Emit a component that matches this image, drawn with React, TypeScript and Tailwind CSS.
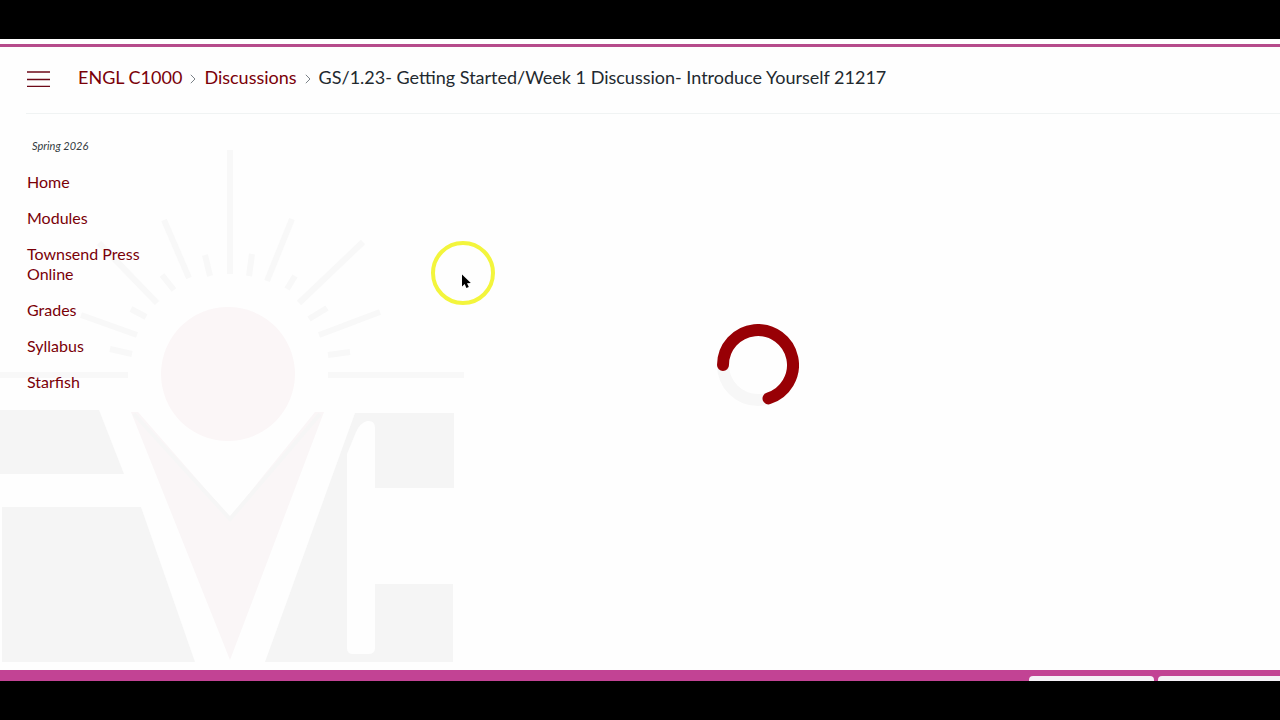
const navItems = [
  "Home",
  "Modules",
  "Townsend Press Online",
  "Grades",
  "Syllabus",
  "Starfish",
];

function Separator() {
  return (
    <svg viewBox="0 0 6 10" className="mx-2 mt-1 h-[10px] w-[6px]" fill="none" stroke="#7b8288" aria-hidden="true">
      <path d="M0.8 0.8 L5 5 L0.8 9.2" />
    </svg>
  );
}

function Watermark() {
  return (
    <svg
      viewBox="0 0 470 520"
      className="pointer-events-none absolute bottom-1 left-0 h-[520px] w-[470px]"
      aria-hidden="true"
    >
      {/* sun */}
      <circle cx="228" cy="228" r="67" fill="#fbf6f7" />

      {/* rays */}
      <g stroke="#f8f8f8" strokeWidth="6" fill="none">
        <path d="M230 4 V128" />
        <path d="M164 74 L189 132" />
        <path d="M292 73 L267 135" />
        <path d="M99 97 L157 157" />
        <path d="M363 96 L299 157" />
        <path d="M81 169 L137 189" />
        <path d="M380 166 L319 189" />
        <path d="M0 229 H128" />
        <path d="M328 229 H464" />
        <path d="M205 109 L210 130" />
        <path d="M252 108 L249 130" />
        <path d="M162 129 L174 144" />
        <path d="M295 130 L287 143" />
        <path d="M131 163 L146 171" />
        <path d="M327 162 L309 173" />
        <path d="M110 203 L132 208" />
        <path d="M350 206 L328 209" />
      </g>

      {/* letters F, V, C */}
      <g fill="#f5f5f5">
        <path d="M0 264 H99 L124 328 H0 Z" />
        <path d="M2 361 H141 L195 516 H2 Z" />
        <path d="M355 267 H454 V342 H375 V282 Q375 274 367 275 Q360 277 356 286 L347 308 V502 Q347 508 353 508 H368 Q375 508 375 502 V438 H453 V516 H265 Z" />
      </g>
      <path d="M131 266 H138 L230 371 L315 266 H324 L230 514 Z" fill="#faf6f7" />
      <path d="M134 268 L230 373 L320 268" fill="none" stroke="#f6f6f6" strokeWidth="4" />
    </svg>
  );
}

function Spinner() {
  return (
    <svg viewBox="0 0 82 82" className="h-[82px] w-[82px]" fill="none" strokeWidth="12" role="img" aria-label="Loading">
      <circle cx="41" cy="41" r="35" stroke="#f7f7f7" />
      <path d="M6 41 A35 35 0 1 1 51.5 74.4" stroke="#980005" strokeLinecap="round" />
    </svg>
  );
}

function Pointer() {
  return (
    <div className="pointer-events-none absolute left-[431px] top-[194px] h-16 w-16 rounded-full border-4 border-[#f3f53c]">
      <svg viewBox="0 0 10 15" className="absolute left-[26px] top-[29px] h-[15px] w-[10px]" aria-hidden="true">
        <path d="M1 0.5 V12.6 L3.7 10 L5.4 14 L7.8 13 L6 9.2 L9.8 9 Z" fill="#000" />
      </svg>
    </div>
  );
}

export default function App() {
  return (
    <div className="flex min-h-screen flex-col overflow-hidden bg-black py-[39px] font-['Lato',sans-serif]">
      <div className="border-b-[3px] border-[#b64b8b] bg-white pt-[5px]" />

      <div className="relative flex flex-1 flex-col bg-[#fefefe]">
        <Watermark />

        <header className="relative ml-[26px] flex h-[67px] items-center border-b border-[#f0f3f3] pb-[6px]">
          <button type="button" aria-label="Course menu" className="mt-1 mr-7 h-4 w-6">
            <svg viewBox="0 0 24 16" className="h-4 w-6" stroke="#6d0a18" strokeWidth="1.5" aria-hidden="true">
              <path d="M1 1 H24 M1 8.5 H24 M1 15.5 H24" />
            </svg>
          </button>
          <nav aria-label="Breadcrumb" className="flex items-center text-lg leading-6 text-[#22292f]">
            <a href="#course" className="text-[#7a0008]">ENGL C1000</a>
            <Separator />
            <a href="#discussions" className="text-[#7a0008]">Discussions</a>
            <Separator />
            <span>GS/1.23- Getting Started/Week 1 Discussion- Introduce Yourself 21217</span>
          </nav>
        </header>

        <div className="relative flex flex-1">
          <aside className="w-[236px] pt-6 pl-[27px]">
            <p className="pl-[5px] text-[11px] leading-4 text-[#333a40] italic">Spring 2026</p>
            <nav aria-label="Course" className="w-[130px] pt-[10px]">
              {navItems.map((item) => (
                <a key={item} href="#nav" className="block py-2 text-base leading-5 text-[#7a0008]">
                  {item}
                </a>
              ))}
            </nav>
          </aside>
          <main className="flex flex-1 justify-center pt-[210px]">
            <Spinner />
          </main>
        </div>

        <Pointer />
      </div>

      <div className="flex h-[11px] justify-end gap-1 overflow-hidden bg-[#c24394] pt-[6px]">
        <div className="w-[125px] rounded-t-sm bg-[#f5f2f7]" />
        <div className="w-[122px] rounded-tl-sm bg-[#f5f2f7]" />
      </div>
    </div>
  );
}
